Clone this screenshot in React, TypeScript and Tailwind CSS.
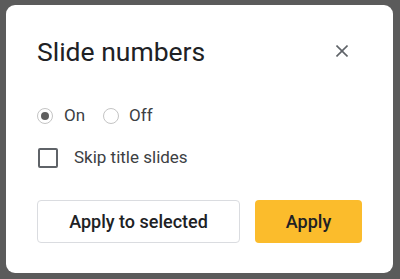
import React from "react";

export default function App() {
  return (
    <div className="w-[400px] h-[279px] bg-[#5b5b5b] pt-[5px] pl-[6px] pr-[7px] pb-[6px] box-border" style={{ fontFamily: "Roboto, 'Liberation Sans', sans-serif" }}>
      <div className="w-full h-full bg-white rounded-[9px] pt-[31px] px-[31px] pb-[30px] box-border flex flex-col">
        <div className="flex items-center justify-between">
          <h1 className="text-[26.5px] leading-[32px] text-[#202124] font-normal">Slide numbers</h1>
          <svg width="12" height="12" viewBox="0 0 12 12" className="mr-[14.5px] mt-[-3px]" fill="none" stroke="#5f6368" strokeWidth="1.6">
            <line x1="0.5" y1="0.5" x2="11.5" y2="11.5" />
            <line x1="11.5" y1="0.5" x2="0.5" y2="11.5" />
          </svg>
        </div>
        <div className="mt-[36px] flex items-center h-[24px] text-[17px] text-[#3c4043]">
          <span className="w-[16px] h-[16px] rounded-full border-[1.5px] border-[#c4c4c4] flex items-center justify-center box-border">
            <span className="w-[8px] h-[8px] rounded-full bg-[#5f5f5f]" />
          </span>
          <span className="ml-[11px]">On</span>
          <span className="ml-[18px] w-[16px] h-[16px] rounded-full border-[1.5px] border-[#c4c4c4] box-border" />
          <span className="ml-[10px]">Off</span>
        </div>
        <div className="mt-[18px] flex items-center h-[24px] text-[17px] text-[#3c4043]">
          <span className="ml-[1px] w-[20px] h-[20px] border-2 border-[#5f6368] rounded-[2px] box-border" />
          <span className="ml-[16px]">Skip title slides</span>
        </div>
        <div className="mt-auto flex gap-[15px]">
          <button className="w-[203px] h-[43px] border border-[#dadce0] rounded-[4px] bg-white text-[18px] font-medium text-[#202124]">Apply to selected</button>
          <button className="w-[107px] h-[43px] rounded-[4px] bg-[#fbbc2c] text-[18px] font-medium text-[#202124]">Apply</button>
        </div>
      </div>
    </div>
  );
}
